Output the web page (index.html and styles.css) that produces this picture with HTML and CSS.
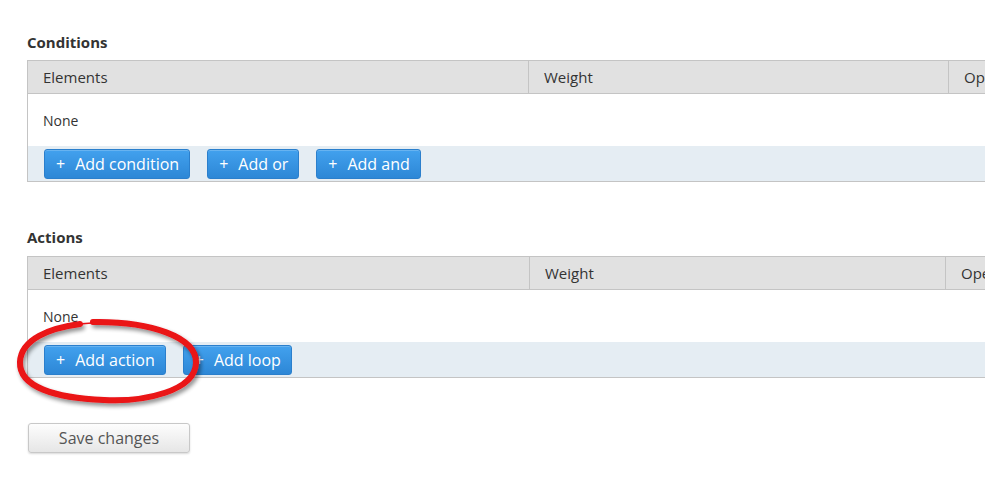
FILE: index.html
```html
<!DOCTYPE html>
<html>
<head>
<meta charset="utf-8">
<link rel="stylesheet" href="styles.css">
</head>
<body>
<main class="page">
  <section class="block">
    <h2 class="block-title">Conditions</h2>
    <div class="table">
      <div class="thead thead-cond">
        <div class="th">Elements</div>
        <div class="th">Weight</div>
        <div class="th">Operations</div>
      </div>
      <div class="tbody">None</div>
      <div class="tfoot">
        <button class="btn-blue"><span class="plus">+</span>Add condition</button>
        <button class="btn-blue"><span class="plus">+</span>Add or</button>
        <button class="btn-blue"><span class="plus">+</span>Add and</button>
      </div>
    </div>
  </section>
  <section class="block block-actions">
    <h2 class="block-title">Actions</h2>
    <div class="table">
      <div class="thead thead-act">
        <div class="th">Elements</div>
        <div class="th">Weight</div>
        <div class="th">Operations</div>
      </div>
      <div class="tbody">None</div>
      <div class="tfoot">
        <button class="btn-blue"><span class="plus">+</span>Add action</button>
        <button class="btn-blue"><span class="plus">+</span>Add loop</button>
      </div>
    </div>
  </section>
  <div class="form-actions">
    <button class="btn-save">Save changes</button>
  </div>
</main>
<svg class="annotation" width="985" height="499" viewBox="0 0 985 499" aria-hidden="true">
  <defs>
    <filter id="sh" x="-20%" y="-20%" width="140%" height="140%">
      <feGaussianBlur in="SourceAlpha" stdDeviation="2"/>
      <feOffset dx="2" dy="3" result="b"/>
      <feComponentTransfer><feFuncA type="linear" slope="0.45"/></feComponentTransfer>
      <feMerge><feMergeNode/><feMergeNode in="SourceGraphic"/></feMerge>
    </filter>
  </defs>
  <path filter="url(#sh)" d="M 93 322 C 150 321, 197 337, 196 363 C 195 391, 145 402, 104 400 C 55 398, 19 387, 20 362 C 21 339, 50 328, 80 324" fill="none" stroke="#ea1218" stroke-width="6" stroke-linecap="round"/>
  <path d="M 80 324 C 84 323.5, 88 323.2, 92 323" fill="none" stroke="#ea1218" stroke-width="1.5" stroke-linecap="round"/>
</svg>
</body>
</html>
```
FILE: styles.css
```css
html, body {
  margin: 0;
  padding: 0;
  overflow: hidden;
  background: #fff;
}
body {
  font-family: "Open Sans", "Liberation Sans", sans-serif;
  color: #333;
  width: 985px;
  height: 499px;
  position: relative;
}
.page {
  padding: 32px 0 0 27px;
  width: 1100px;
}
.block-title {
  margin: 0 0 8px 0;
  font-size: 15px;
  line-height: 20px;
  font-weight: 700;
  color: #333;
}
.block-actions {
  margin-top: 45px;
}
.block-actions .block-title {
  margin-bottom: 9px;
}
.table {
  border: 1px solid #c4c4c4;
  width: 1040px;
}
.thead {
  display: grid;
  height: 32px;
  background: #e1e1e1;
  border-bottom: 1px solid #c4c4c4;
}
.thead-cond { grid-template-columns: 500px 420px 1fr; }
.thead-act { grid-template-columns: 501px 416px 1fr; }
.th {
  display: flex;
  align-items: center;
  padding-left: 15px;
  font-size: 15px;
  color: #333;
  border-left: 1px solid #c4c4c4;
}
.th:first-child { border-left: none; }
.tbody {
  height: 52px;
  display: flex;
  align-items: center;
  padding-left: 15px;
  font-size: 14px;
  color: #333;
}
.tfoot {
  background: #e5edf3;
  height: 35px;
  box-sizing: border-box;
  padding: 3px 0 2px 16px;
  display: flex;
  gap: 17px;
}
.btn-blue {
  height: 30px;
  box-sizing: border-box;
  padding: 0 10px 0 11px;
  border: 1px solid #2b7fcc;
  border-radius: 3px;
  background: linear-gradient(#42a1ee, #2d87d6);
  color: #fff;
  font-family: "Open Sans", "Liberation Sans", sans-serif;
  font-size: 16px;
  display: flex;
  align-items: center;
  box-shadow: inset 0 1px 0 rgba(255,255,255,0.2);
}
.plus {
  font-size: 16px;
  margin-right: 10px;
}
.form-actions {
  margin-top: 45px;
}
.btn-save {
  margin-left: 1px;
  width: 162px;
  height: 30px;
  border: 1px solid #c8c8c8;
  border-radius: 3px;
  background: linear-gradient(#fdfdfd, #e6e6e6);
  color: #555;
  font-family: "Open Sans", "Liberation Sans", sans-serif;
  font-size: 16px;
  box-shadow: 0 1px 2px rgba(0,0,0,0.15);
}
.annotation {
  position: absolute;
  left: 0;
  top: 0;
  pointer-events: none;
}
```
